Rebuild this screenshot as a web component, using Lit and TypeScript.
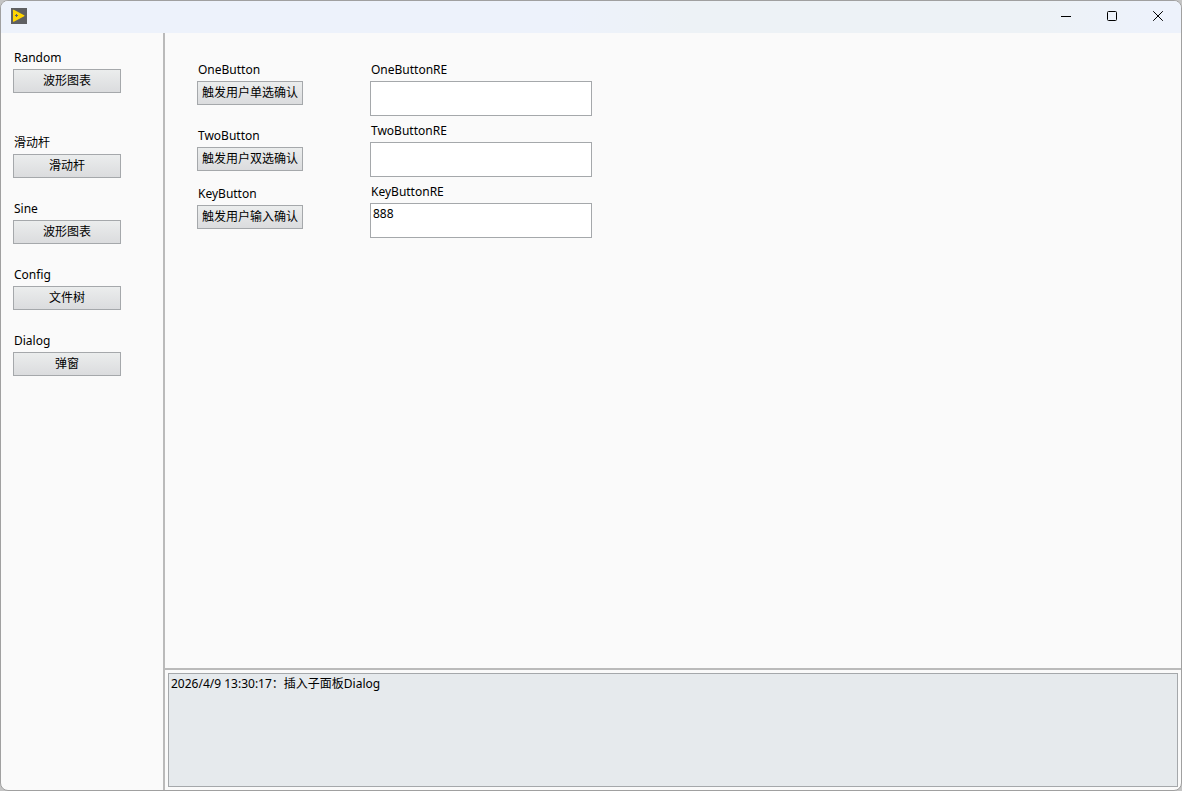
import { LitElement, html, css } from "lit";
import { customElement, property, state } from "lit/decorators.js";

interface Command {
  id: string;
  label: string;
  caption: string;
}

const NAV_GROUPS: Command[][] = [
  [{ id: "random", label: "Random", caption: "波形图表" }],
  [
    { id: "slider", label: "滑动杆", caption: "滑动杆" },
    { id: "sine", label: "Sine", caption: "波形图表" },
    { id: "config", label: "Config", caption: "文件树" },
    { id: "dialog", label: "Dialog", caption: "弹窗" },
  ],
];

const TRIGGER_GROUPS: Command[][] = [
  [{ id: "one", label: "OneButton", caption: "触发用户单选确认" }],
  [
    { id: "two", label: "TwoButton", caption: "触发用户双选确认" },
    { id: "key", label: "KeyButton", caption: "触发用户输入确认" },
  ],
];

const RESULTS = [
  { id: "one-re", label: "OneButtonRE", value: "" },
  { id: "two-re", label: "TwoButtonRE", value: "" },
  { id: "key-re", label: "KeyButtonRE", value: "888" },
];

@customElement("title-bar")
export class TitleBar extends LitElement {
  static styles = css`
    :host {
      box-sizing: border-box;
      display: flex;
      align-items: center;
      justify-content: space-between;
      flex: none;
      height: 32px;
      padding: 0 0 2px 10px;
      background: linear-gradient(90deg, #edf2fb, #edf2fb 48%, #edf2f6 58%, #edf2f6 88%, #edf2fb 97%);
    }
    .logo,
    .glyph {
      display: block;
    }
    .controls {
      display: flex;
      height: 100%;
    }
    .control {
      display: flex;
      align-items: center;
      justify-content: center;
      width: 46px;
      padding: 0;
      border: 0;
      background: none;
    }
    .glyph {
      fill: none;
      stroke: #000;
    }
  `;

  render() {
    return html`
      <svg class="logo" width="16" height="16" viewBox="0 0 16 16" aria-hidden="true">
        <rect width="16" height="16" fill="#5f6062" />
        <path d="M2 2.200Q2 1.400 2.800 1.800L13.200 7.200Q14 7.700 13.200 8.200L2.800 13.700Q2 14 2 13.200Z" fill="#ffd500" />
        <path d="M4 7.500h3M5.500 6v3" stroke="#5f6062" />
      </svg>
      <div class="controls">
        <button class="control" aria-label="最小化">
          <svg class="glyph" width="10" height="10" viewBox="0 0 10 10"><path d="M0 5.500h10" /></svg>
        </button>
        <button class="control" aria-label="最大化">
          <svg class="glyph" width="10" height="10" viewBox="0 0 10 10">
            <rect x=".5" y=".5" width="9" height="9" rx="1" />
          </svg>
        </button>
        <button class="control" aria-label="关闭">
          <svg class="glyph" width="10" height="10" viewBox="0 0 10 10">
            <path d="M.2.2l9.600 9.600M9.800.2L.2 9.800" />
          </svg>
        </button>
      </div>
    `;
  }
}

@customElement("command-list")
export class CommandList extends LitElement {
  @property({ attribute: false }) groups: Command[][] = [];

  static styles = css`
    :host {
      display: flex;
      flex-direction: column;
      align-items: flex-start;
      gap: var(--group-gap);
    }
    .group {
      display: flex;
      flex-direction: column;
      gap: var(--item-gap);
    }
    .item {
      display: flex;
      flex-direction: column;
      gap: 3px;
    }
    .label {
      padding-left: 1px;
      line-height: 16px;
    }
    .button {
      box-sizing: border-box;
      width: var(--button-width);
      height: 24px;
      padding: 0;
      border: 1px solid #a5a8ab;
      background: linear-gradient(#ebeded, #dbdcde);
      color: #000;
      font: inherit;
      line-height: 16px;
      white-space: nowrap;
    }
    .button:active {
      background: #d3d5d7;
    }
  `;

  private pick(command: Command) {
    this.dispatchEvent(new CustomEvent("command", { detail: command }));
  }

  render() {
    return this.groups.map(
      (group) => html`
        <div class="group">
          ${group.map(
            (c) => html`
              <div class="item">
                <label class="label" for=${c.id}>${c.label}</label>
                <button class="button" id=${c.id} @click=${() => this.pick(c)}>${c.caption}</button>
              </div>
            `
          )}
        </div>
      `
    );
  }
}

@customElement("app-root")
export class AppRoot extends LitElement {
  @state() private log = "2026/4/9 13:30:17：插入子面板Dialog";

  static styles = css`
    :host {
      display: block;
      height: 100vh;
      background: #c4c4c4;
      color: #000;
      font: 12px "Noto Sans", "Noto Sans CJK SC", sans-serif;
    }
    .window {
      box-sizing: border-box;
      display: flex;
      flex-direction: column;
      height: 100%;
      border: 1px solid #a0a0a0;
      border-radius: 8px;
      overflow: hidden;
      background: #fafafa;
    }
    .body {
      display: flex;
      flex: 1;
      min-height: 0;
    }
    .sidebar {
      box-sizing: border-box;
      flex: none;
      width: 164px;
      padding: 17px 12px;
      border-right: 2px solid #bababa;
    }
    .nav {
      --group-gap: 42px;
      --item-gap: 23px;
      --button-width: 108px;
    }
    .content {
      display: flex;
      flex: 1;
      flex-direction: column;
      min-width: 0;
    }
    .panel {
      display: flex;
      flex: 1;
      align-items: flex-start;
      gap: 67px;
      padding: 29px 32px;
    }
    .triggers {
      --group-gap: 23px;
      --item-gap: 15px;
      --button-width: 106px;
    }
    .results {
      display: flex;
      flex-direction: column;
      gap: 7px;
    }
    .field {
      display: flex;
      flex-direction: column;
      gap: 3px;
    }
    .label {
      padding-left: 1px;
      line-height: 16px;
    }
    .text {
      box-sizing: border-box;
      margin: 0;
      padding: 2px;
      border: 1px solid #a5a8ab;
      border-radius: 0;
      outline: 0;
      resize: none;
      background: #fff;
      color: #000;
      font: inherit;
      line-height: 16px;
    }
    .result {
      width: 222px;
      height: 35px;
      overflow: hidden;
    }
    .console {
      display: flex;
      flex: none;
      height: 114px;
      padding: 3px;
      border-top: 2px solid #bababa;
    }
    .log {
      flex: 1;
      background: #e6eaed;
    }
  `;

  private append(e: CustomEvent<Command>) {
    this.log += "\n" + new Date().toLocaleString("zh-CN") + "：插入子面板" + e.detail.label;
  }

  render() {
    return html`
      <div class="window">
        <title-bar></title-bar>
        <div class="body">
          <nav class="sidebar">
            <command-list class="nav" .groups=${NAV_GROUPS} @command=${this.append}></command-list>
          </nav>
          <main class="content">
            <section class="panel">
              <command-list class="triggers" .groups=${TRIGGER_GROUPS}></command-list>
              <div class="results">
                ${RESULTS.map(
                  (r) => html`
                    <div class="field">
                      <label class="label" for=${r.id}>${r.label}</label>
                      <textarea class="text result" id=${r.id} .value=${r.value}></textarea>
                    </div>
                  `
                )}
              </div>
            </section>
            <section class="console">
              <textarea class="text log" aria-label="日志" readonly .value=${this.log}></textarea>
            </section>
          </main>
        </div>
      </div>
    `;
  }
}
